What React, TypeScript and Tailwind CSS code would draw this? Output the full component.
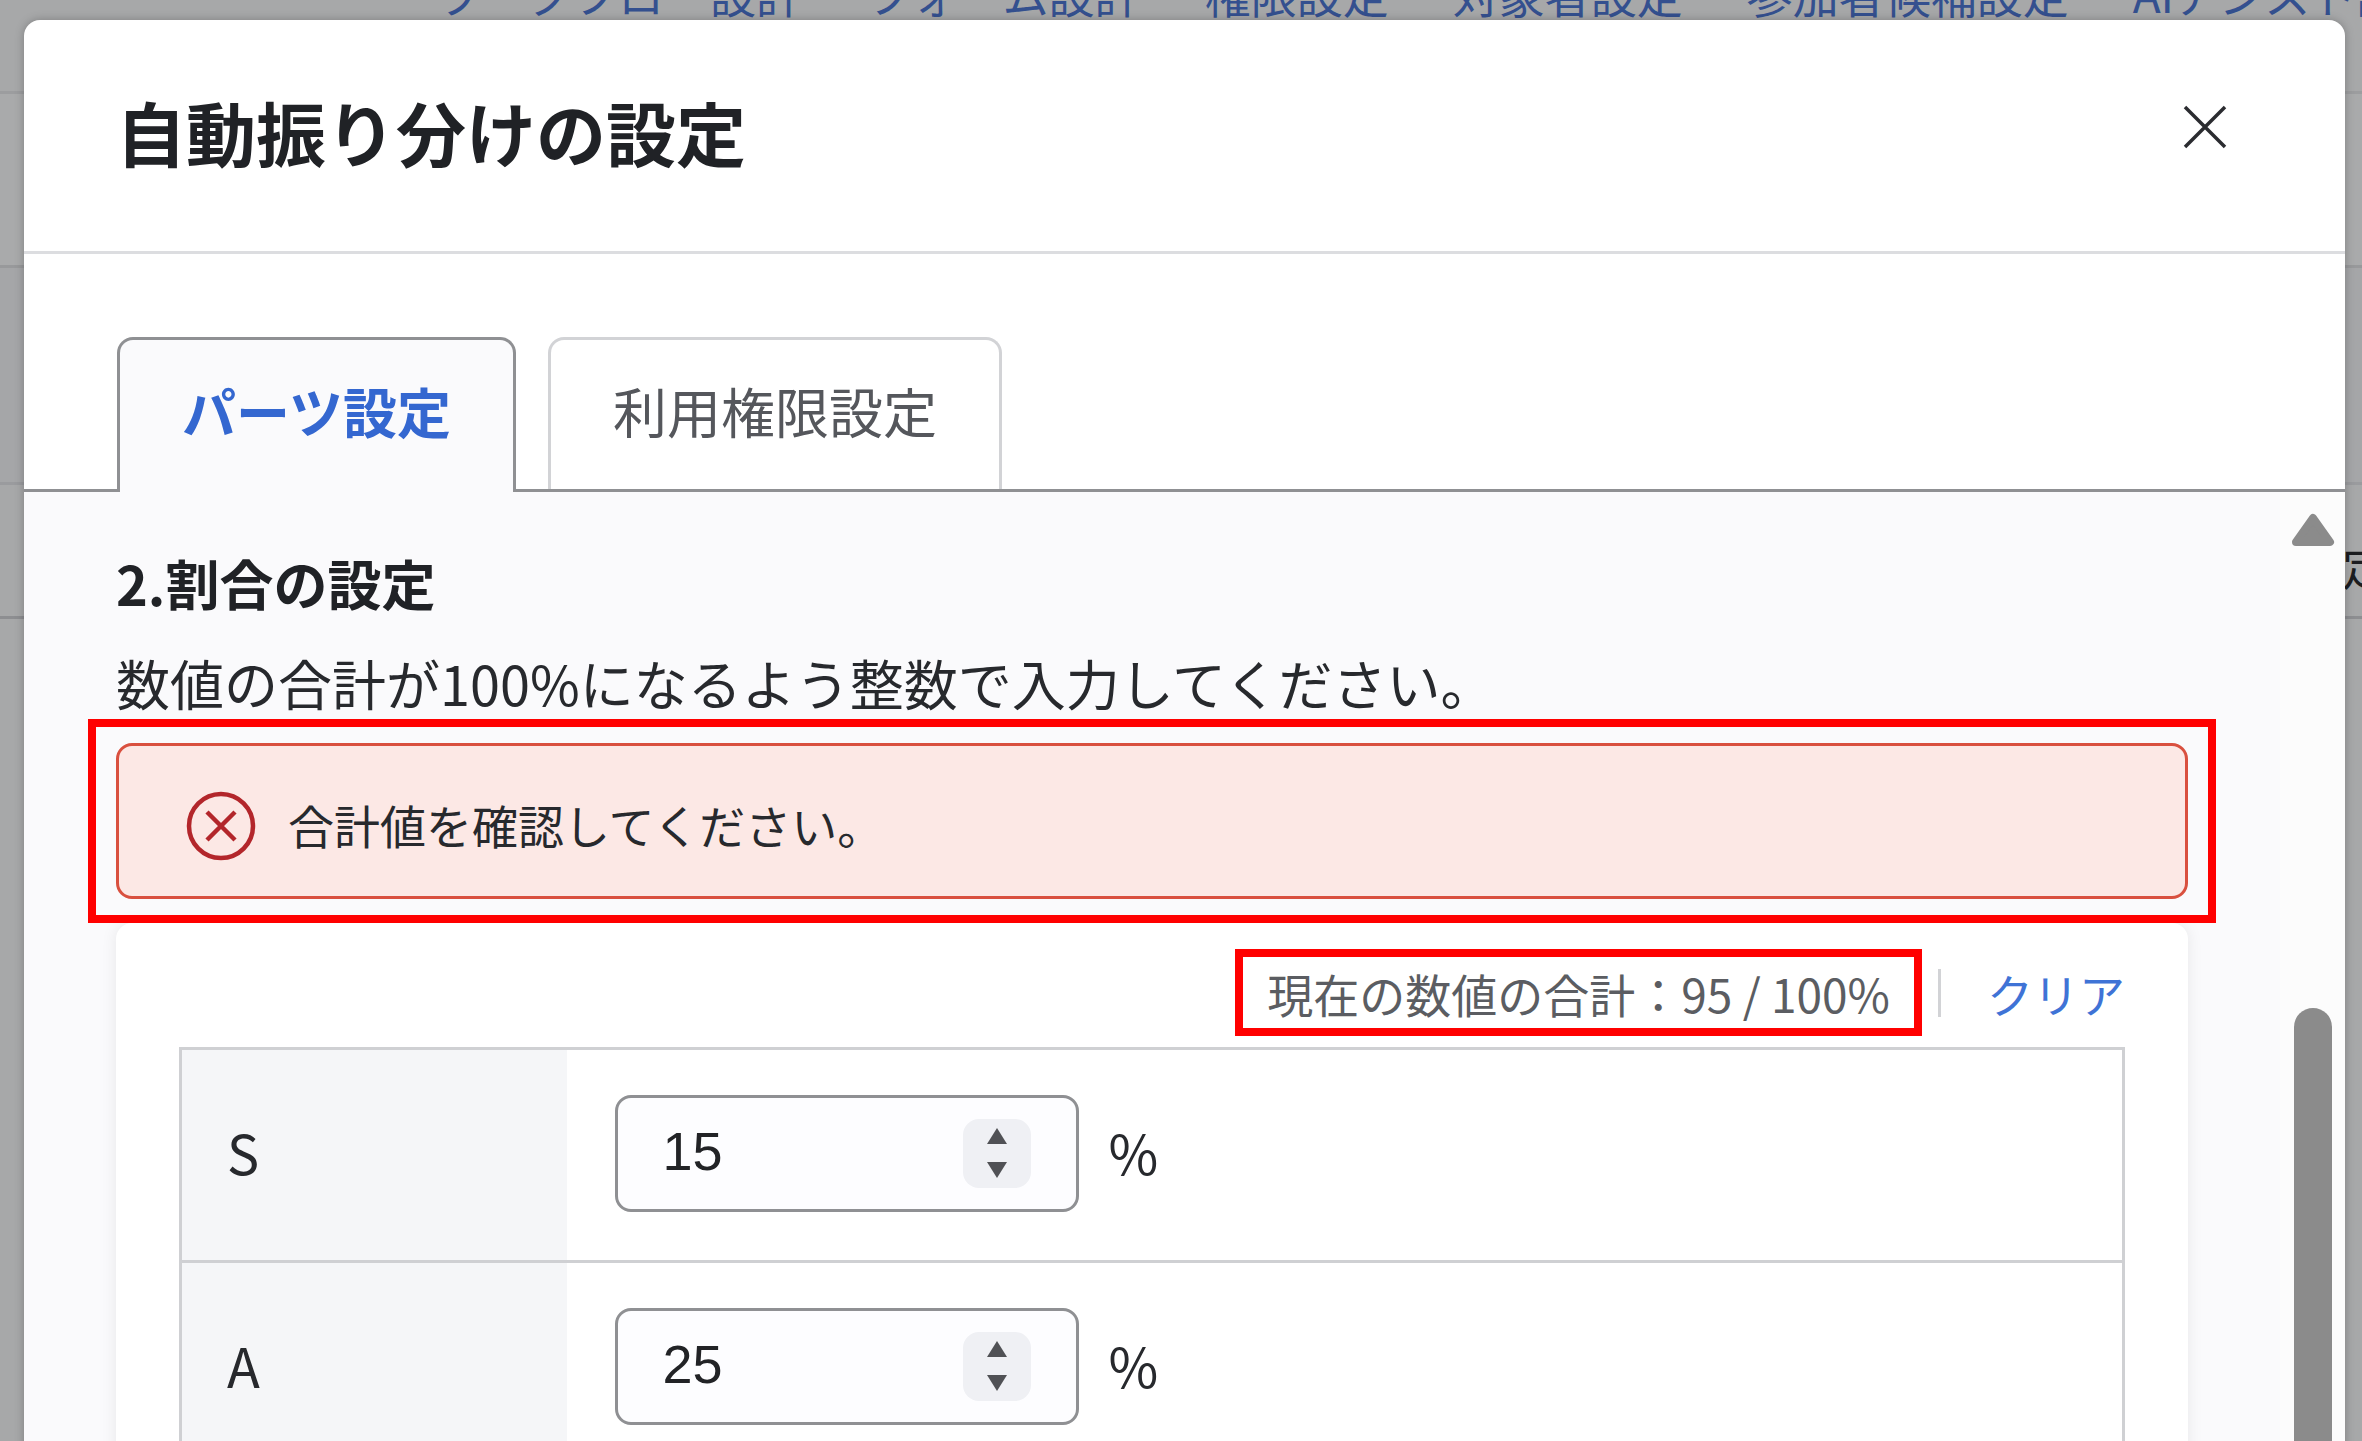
import { useState } from 'react';

interface Rank {
  label: string;
  value: number;
}

const NAV_ITEMS = [
  'ワークフロー設計',
  'フォーム設計',
  '権限設定',
  '対象者設定',
  '参加者候補設定',
  'AIアシスト設定',
];

const INITIAL_RANKS: Rank[] = [
  { label: 'S', value: 15 },
  { label: 'A', value: 25 },
];

// Total of the ranks that are further down the list
const OTHER_TOTAL = 55;

function BackgroundPage() {
  return (
    <div className="absolute inset-0 flex flex-col overflow-hidden bg-[#a7a8a9]">
      <div className="h-[94px] border-b-3 border-[#9c9d9f]">
        <nav className="-mt-[34px] ml-[434px] flex gap-16 text-[46px] leading-[54px] whitespace-nowrap text-[#34508f]">
          {NAV_ITEMS.map((item) => (
            <a key={item} href="#">
              {item}
            </a>
          ))}
        </nav>
      </div>
      <div className="h-[174px] border-b-3 border-[#98999b] bg-[#a9aaab]" />
      <div className="h-[217px] border-b-3 border-[#9a9b9e] bg-[#a5a6a8]" />
      <div className="flex h-[134px] items-center justify-end border-b-3 border-[#8d8e91]">
        <span className="-mr-[26px] pt-7 text-[46px] leading-[54px] text-[#1c1d20]">定</span>
      </div>
    </div>
  );
}

function ErrorIcon() {
  return (
    <svg viewBox="0 0 70 70" className="size-[70px] shrink-0" fill="none" stroke="#b3262b" aria-hidden="true">
      <circle cx="35" cy="35" r="32" strokeWidth="4.5" />
      <path d="M21 21 49 49M49 21 21 49" strokeWidth="4.5" />
    </svg>
  );
}

interface PercentInputProps {
  id: string;
  value: number;
  onChange: (value: number) => void;
}

function PercentInput({ id, value, onChange }: PercentInputProps) {
  return (
    <div className="flex h-[117px] w-[464px] items-center rounded-2xl border-3 border-[#8f9093] bg-[#fdfdff] px-[45px]">
      <input
        id={id}
        type="number"
        value={value}
        onChange={(e) => onChange(Number(e.target.value))}
        className="w-full min-w-0 flex-1 [appearance:textfield] bg-transparent pb-1 font-['Liberation_Sans',sans-serif] text-[54px] leading-[64px] text-[#222326] outline-none [&::-webkit-inner-spin-button]:appearance-none"
      />
      <div className="flex h-[69px] w-[68px] shrink-0 flex-col rounded-2xl bg-[#eff0f4] text-[#505155]">
        <button type="button" aria-label="増やす" onClick={() => onChange(value + 1)} className="flex flex-1 items-center justify-center">
          <svg viewBox="0 0 22 16" className="h-4 w-[22px]" fill="currentColor">
            <path d="M11 0 21 16H1z" />
          </svg>
        </button>
        <button type="button" aria-label="減らす" onClick={() => onChange(value - 1)} className="flex flex-1 items-center justify-center">
          <svg viewBox="0 0 22 16" className="h-4 w-[22px]" fill="currentColor">
            <path d="M1 0H21L11 16z" />
          </svg>
        </button>
      </div>
    </div>
  );
}

export default function App() {
  const [ranks, setRanks] = useState(INITIAL_RANKS);

  const total = ranks.reduce((sum, rank) => sum + rank.value, OTHER_TOTAL);

  function updateRank(label: string, value: number) {
    setRanks(ranks.map((rank) => (rank.label === label ? { ...rank, value } : rank)));
  }

  function handleClear() {
    setRanks(ranks.map((rank) => ({ ...rank, value: 0 })));
  }

  return (
    <div className="relative h-screen overflow-hidden font-['Noto_Sans_CJK_JP',sans-serif] text-[#27292d]">
      <BackgroundPage />

      <div
        role="dialog"
        aria-labelledby="dialog-title"
        className="relative mt-5 mr-[17px] ml-6 flex h-full flex-col overflow-hidden rounded-t-2xl bg-white shadow-[0_0_10px_rgba(0,0,0,0.25)]"
      >
        <header className="flex h-[234px] shrink-0 items-start justify-between border-b-3 border-[#dcdde0] pt-[67px] pr-[117px] pl-[92px]">
          <h2 id="dialog-title" className="text-[70px] leading-[90px] font-bold text-[#202226]">
            自動振り分けの設定
          </h2>
          <button type="button" aria-label="閉じる" className="mt-[17px]">
            <svg viewBox="0 0 46 46" className="size-[46px]" fill="none" stroke="#2b2c30" strokeWidth="3.5">
              <path d="M3 3 43 43M43 3 3 43" />
            </svg>
          </button>
        </header>

        <div role="tablist" className="flex shrink-0 gap-8 border-b-3 border-[#8f9093] px-[93px] pt-[83px] text-[54px]">
          <button
            type="button"
            role="tab"
            aria-selected="true"
            className="-mb-[3px] h-[155px] rounded-t-2xl border-3 border-b-0 border-[#8f9093] bg-[#fafafc] px-[62px] pb-3 font-bold text-[#3467d0]"
          >
            パーツ設定
          </button>
          <button
            type="button"
            role="tab"
            aria-selected="false"
            className="h-[152px] rounded-t-2xl border-3 border-b-0 border-[#d2d3d6] px-[62px] pb-2 text-[#55575c]"
          >
            利用権限設定
          </button>
        </div>

        <div className="flex min-h-0 flex-1 bg-[#fafafc]">
          <div className="min-w-0 flex-1 overflow-hidden px-[92px] pt-[46px]">
            <h3 className="text-[54px] leading-[90px] font-bold text-[#202226]">2.割合の設定</h3>
            <p className="mt-2.5 text-[54px] leading-[90px]">数値の合計が100%になるよう整数で入力してください。</p>

            <div className="relative z-10 mt-[15px]">
              <div role="alert" className="flex h-[156px] items-center gap-8 rounded-2xl border-3 border-[#d9503f] bg-[#fce8e5] px-[67px] pt-2.5">
                <ErrorIcon />
                <span className="pb-1 text-[46px] leading-[60px]">合計値を確認してください。</span>
              </div>
              <div className="pointer-events-none absolute -inset-x-7 -inset-y-6 border-8 border-[#ff0000]" />
            </div>

            <div className="mt-6 rounded-2xl bg-white px-[63px] pt-[26px] pb-16 shadow-[0_0_16px_rgba(0,0,0,0.08)]">
              <div className="mb-[11px] flex items-center justify-end text-[46px] leading-[60px]">
                <span className="flex h-[87px] items-center border-8 border-[#ff0000] px-6 text-[#5b5d62]">
                  現在の数値の合計：{total} / 100%
                </span>
                <span className="ml-4 h-12 w-[3px] bg-[#d2d3d6]" />
                <button type="button" onClick={handleClear} className="ml-[46px] text-[#3f73d6]">
                  クリア
                </button>
              </div>

              <table className="w-full border-collapse border-3 border-[#cfd0d3] text-[54px]">
                <tbody>
                  {ranks.map(({ label, value }) => (
                    <tr key={label} className="h-[213px] border-b-3 border-[#cfd0d3]">
                      <th scope="row" className="w-[386px] bg-[#f5f6f8] pb-2 pl-[45px] text-left font-normal">
                        <label htmlFor={`rank-${label}`}>{label}</label>
                      </th>
                      <td className="pb-1 pl-12">
                        <div className="flex items-center gap-[30px]">
                          <PercentInput id={`rank-${label}`} value={value} onChange={(next) => updateRank(label, next)} />
                          <span className="pb-1">%</span>
                        </div>
                      </td>
                    </tr>
                  ))}
                </tbody>
              </table>
            </div>
          </div>

          {/* scrollbar */}
          <div className="flex w-[65px] shrink-0 flex-col items-center bg-[#fcfcfc] pt-[21px]">
            <svg viewBox="0 0 44 34" className="h-[34px] w-11" fill="#8b8b8b" stroke="#8b8b8b" strokeWidth="8" strokeLinejoin="round">
              <path d="M22 5 39 29H5z" />
            </svg>
            <div className="mt-[461px] w-[38px] flex-1 rounded-t-full bg-[#8b8b8b]" />
          </div>
        </div>
      </div>
    </div>
  );
}
